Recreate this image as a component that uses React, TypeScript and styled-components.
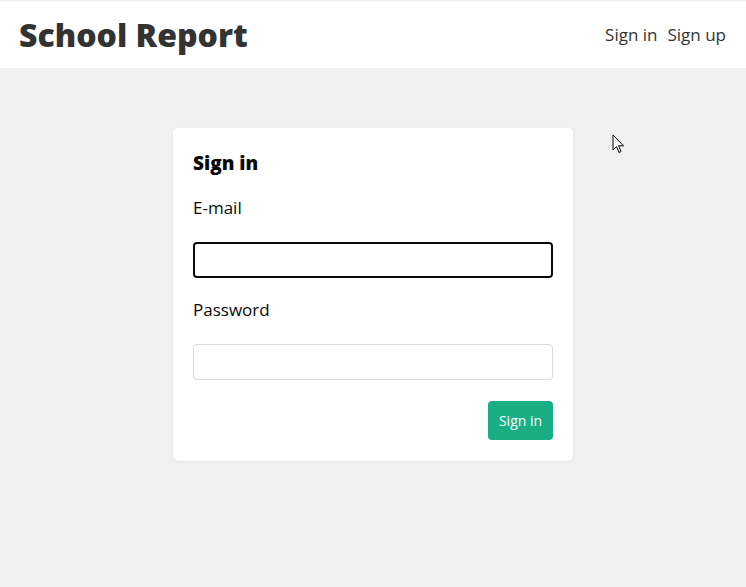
import React from 'react';
import styled, { createGlobalStyle } from 'styled-components';

const colors = {
  page: '#f0f0f0',
  text: '#333333',
  dark: '#0a0a0a',
  border: '#dbdbdb',
  primary: '#1aae84',
};

const GlobalStyle = createGlobalStyle`
  html, body {
    margin: 0;
    padding: 0;
    background-color: ${colors.page};
    font-family: 'Open Sans', 'Liberation Sans', sans-serif;
  }
  * {
    box-sizing: border-box;
  }
`;

const Page = styled.div`
  min-height: 587px;
  display: flex;
  flex-direction: column;
  position: relative;
`;

const Header = styled.header`
  height: 68px;
  background-color: white;
  display: flex;
  align-items: center;
  justify-content: space-between;
  padding: 0 20px 0 19px;
  box-shadow: inset 0 2px 2px -1px rgba(0, 0, 0, 0.08);
`;

const Brand = styled.h1`
  margin: 0;
  font-size: 32px;
  font-weight: 800;
  color: ${colors.text};
`;

const Nav = styled.nav`
  display: flex;
  gap: 10px;
`;

const NavLink = styled.a`
  font-size: 17px;
  color: ${colors.text};
  text-decoration: none;
`;

const Main = styled.main`
  display: flex;
  justify-content: center;
  padding-top: 60px;
`;

const Card = styled.form`
  width: 400px;
  background-color: white;
  border-radius: 5px;
  padding: 20px 20px 21px;
  box-shadow: 0 1px 3px rgba(0, 0, 0, 0.06);
`;

const Title = styled.h2`
  margin: 0 0 18px;
  font-size: 19px;
  line-height: 30px;
  font-weight: 800;
  color: ${colors.dark};
`;

const Field = styled.div`
  margin-bottom: 20px;
`;

const Label = styled.label`
  display: block;
  font-size: 17px;
  line-height: 24px;
  color: ${colors.dark};
  margin-bottom: 22px;
`;

const Input = styled.input<{ $focused?: boolean }>`
  display: block;
  width: 100%;
  height: 36px;
  border-radius: 4px;
  outline: none;
  font-family: inherit;
  font-size: 16px;
  padding: 0 10px;
  background: white;
  border: ${(p) => (p.$focused ? `2px solid ${colors.dark}` : `1px solid ${colors.border}`)};
`;

const Actions = styled.div`
  display: flex;
  justify-content: flex-end;
  margin-top: 21px;
`;

const Button = styled.button`
  height: 39px;
  width: 65px;
  border: none;
  border-radius: 4px;
  background-color: ${colors.primary};
  color: white;
  font-family: inherit;
  font-size: 14px;
  padding: 0;
`;

const Cursor = styled.svg`
  position: absolute;
  left: 612px;
  top: 134px;
  width: 14px;
  height: 21px;
`;

export default function App() {
  return (
    <Page>
      <GlobalStyle />
      <Header>
        <Brand>School Report</Brand>
        <Nav>
          <NavLink href="#">Sign in</NavLink>
          <NavLink href="#">Sign up</NavLink>
        </Nav>
      </Header>
      <Main>
        <Card onSubmit={(e) => e.preventDefault()}>
          <Title>Sign in</Title>
          <Field>
            <Label>E-mail</Label>
            <Input type="email" $focused />
          </Field>
          <Field>
            <Label>Password</Label>
            <Input type="password" />
          </Field>
          <Actions>
            <Button type="submit">Sign in</Button>
          </Actions>
        </Card>
      </Main>
      <Cursor viewBox="0 0 14 21">
        <path
          d="M1 1 L1 16 L4.5 12.5 L7 18.5 L9 17.6 L6.6 11.8 L11.5 11.8 Z"
          fill="white"
          stroke="black"
          strokeWidth="1"
          strokeLinejoin="round"
        />
      </Cursor>
    </Page>
  );
}
